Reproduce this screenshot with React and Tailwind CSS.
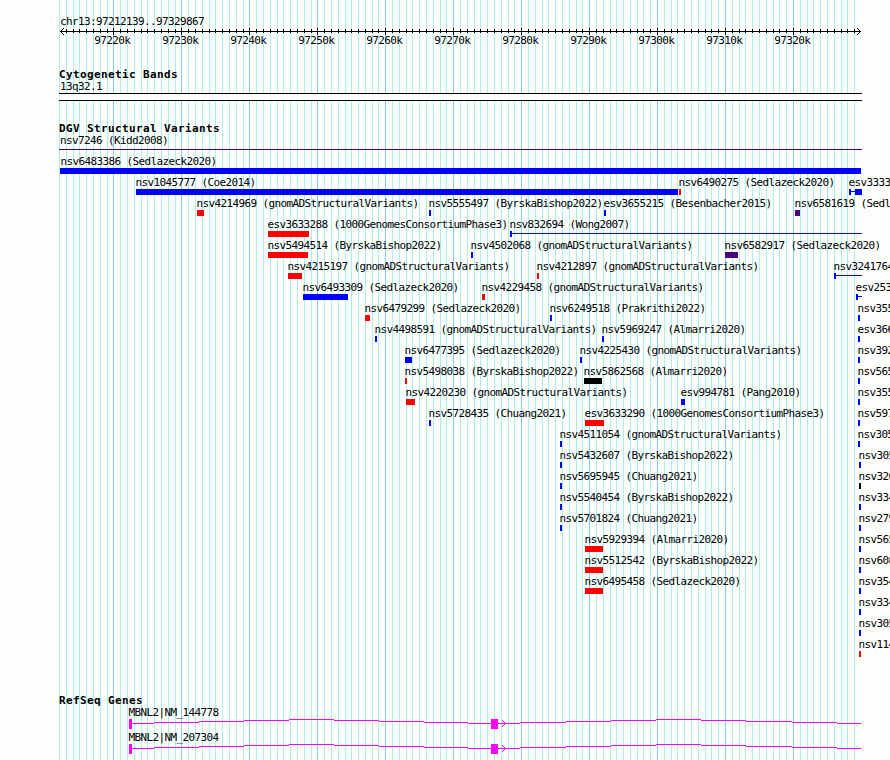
import React from 'react';

const BAR_COLORS = {
  gain: 'bg-[#0000ff]',
  loss: 'bg-[#ff0000]',
  complex: 'bg-[#4b0082]',
  other: 'bg-black',
};

const LABEL = "font-['DejaVu_Sans_Mono','Liberation_Mono',monospace] text-[11px] leading-[13px] tracking-[-0.62px] whitespace-pre text-black";
const HEADING = "font-['DejaVu_Sans_Mono','Liberation_Mono',monospace] text-[11px] leading-[13px] font-bold tracking-[0.38px] whitespace-pre text-black";

// One entry per lane: [name, x, width, type, line end]
const lanes = [
  [
    ['', 60, 801, 'gain'],
    ['nsv6483386 (Sedlazeck2020)', 61, 800, 'gain'],
  ],
  [
    ['nsv1045777 (Coe2014)', 136, 542, 'gain'],
    ['nsv6490275 (Sedlazeck2020)', 679, 2, 'loss'],
    ['esv3333', 849, 2, 'gain', 862],
    ['', 855, 7, 'gain'],
  ],
  [
    ['nsv4214969 (gnomADStructuralVariants)', 197, 7, 'loss'],
    ['nsv5555497 (ByrskaBishop2022)', 429, 2, 'gain'],
    ['esv3655215 (Besenbacher2015)', 604, 2, 'gain'],
    ['nsv6581619 (Sedl', 795, 5, 'complex'],
  ],
  [
    ['esv3633288 (1000GenomesConsortiumPhase3)', 268, 41, 'loss'],
    ['nsv832694 (Wong2007)', 510, 2, 'gain', 862],
  ],
  [
    ['nsv5494514 (ByrskaBishop2022)', 268, 40, 'loss'],
    ['nsv4502068 (gnomADStructuralVariants)', 471, 2, 'gain'],
    ['nsv6582917 (Sedlazeck2020)', 725, 13, 'complex'],
  ],
  [
    ['nsv4215197 (gnomADStructuralVariants)', 288, 14, 'loss'],
    ['nsv4212897 (gnomADStructuralVariants)', 537, 2, 'loss'],
    ['nsv3241764', 834, 2, 'gain', 862],
  ],
  [
    ['nsv6493309 (Sedlazeck2020)', 303, 45, 'gain'],
    ['nsv4229458 (gnomADStructuralVariants)', 482, 3, 'loss'],
    ['esv253', 856, 2, 'gain', 862],
  ],
  [
    ['nsv6479299 (Sedlazeck2020)', 365, 5, 'loss'],
    ['nsv6249518 (Prakrithi2022)', 550, 2, 'gain'],
    ['nsv355', 858, 2, 'gain'],
  ],
  [
    ['nsv4498591 (gnomADStructuralVariants)', 375, 2, 'gain'],
    ['nsv5969247 (Almarri2020)', 602, 2, 'gain'],
    ['esv366', 858, 2, 'gain'],
  ],
  [
    ['nsv6477395 (Sedlazeck2020)', 405, 7, 'gain'],
    ['nsv4225430 (gnomADStructuralVariants)', 580, 2, 'gain'],
    ['nsv392', 858, 2, 'gain'],
  ],
  [
    ['nsv5498038 (ByrskaBishop2022)', 405, 2, 'loss'],
    ['nsv5862568 (Almarri2020)', 584, 18, 'other'],
    ['nsv565', 858, 2, 'gain'],
  ],
  [
    ['nsv4220230 (gnomADStructuralVariants)', 406, 9, 'loss'],
    ['esv994781 (Pang2010)', 681, 4, 'gain'],
    ['nsv355', 858, 2, 'gain'],
  ],
  [
    ['nsv5728435 (Chuang2021)', 429, 2, 'gain'],
    ['esv3633290 (1000GenomesConsortiumPhase3)', 585, 19, 'loss'],
    ['nsv597', 858, 2, 'gain'],
  ],
  [
    ['nsv4511054 (gnomADStructuralVariants)', 560, 2, 'gain'],
    ['nsv305', 858, 2, 'gain'],
  ],
  [
    ['nsv5432607 (ByrskaBishop2022)', 560, 2, 'gain'],
    ['nsv305', 859, 2, 'gain'],
  ],
  [
    ['nsv5695945 (Chuang2021)', 560, 2, 'gain'],
    ['nsv326', 859, 2, 'other'],
  ],
  [
    ['nsv5540454 (ByrskaBishop2022)', 560, 2, 'gain'],
    ['nsv334', 859, 2, 'gain'],
  ],
  [
    ['nsv5701824 (Chuang2021)', 560, 2, 'gain'],
    ['nsv279', 859, 2, 'gain'],
  ],
  [
    ['nsv5929394 (Almarri2020)', 585, 18, 'loss'],
    ['nsv565', 859, 2, 'gain'],
  ],
  [
    ['nsv5512542 (ByrskaBishop2022)', 585, 18, 'loss'],
    ['nsv608', 859, 2, 'gain'],
  ],
  [
    ['nsv6495458 (Sedlazeck2020)', 585, 18, 'loss'],
    ['nsv354', 859, 2, 'gain'],
  ],
  [['nsv334', 859, 2, 'gain']],
  [['nsv305', 859, 2, 'gain']],
  [['nsv114', 859, 2, 'loss']],
];

const genes = ['MBNL2|NM_144778', 'MBNL2|NM_207304'];

// Intron hats, as [x start, x end, y] inside the gene row
const intronSteps = [
  [132, 154, 4], [154, 199, 3], [199, 244, 2], [244, 289, 1], [289, 334, 0],
  [334, 379, 1], [379, 424, 2], [424, 468, 3], [468, 491, 4],
  [498, 520, 4], [520, 566, 3], [566, 611, 2], [611, 656, 1], [656, 701, 0],
  [701, 746, 1], [746, 792, 2], [792, 837, 3], [837, 861, 4],
];

// One position per kilobase, 97212k to 97329k
const gridLines = Array.from({ length: 118 }, (_, i) => ({
  kb: 97212 + i,
  x: Math.floor(59.6145 + i * 6.7949),
}));

const isMajor = (kb) => kb % 10 === 0;

const Grid = () => (
  <svg className="absolute inset-0" width="890" height="760" shapeRendering="crispEdges">
    {gridLines.map(({ kb, x }) => (
      <rect key={kb} x={x} y="0" width="1" height="760" fill={isMajor(kb) ? '#87ceeb' : '#afeeee'} />
    ))}
  </svg>
);

const Ruler = () => (
  <div className="h-[53px] pt-[15px]">
    <p className={`${LABEL} pl-[60px]`}>chr13:97212139..97329867</p>
    <svg className="block" width="890" height="7" shapeRendering="crispEdges">
      <rect x="60" y="3" width="801" height="1" />
      {gridLines.slice(1).map(({ kb, x }) =>
        isMajor(kb) ? (
          <rect key={kb} x={x} y="0" width="1" height="7" />
        ) : (
          <rect key={kb} x={x} y="1" width="1" height="4" />
        )
      )}
      <path d="M61 2h1v1h-1zM62 1h1v1h-1zM63 0h1v1h-1zM61 4h1v1h-1zM62 5h1v1h-1zM63 6h1v1h-1z" />
      <path d="M859 2h1v1h-1zM858 1h1v1h-1zM857 0h1v1h-1zM859 4h1v1h-1zM858 5h1v1h-1zM857 6h1v1h-1z" />
    </svg>
    <div className="relative h-[13px] -mt-px">
      {gridLines.filter(({ kb }) => isMajor(kb)).map(({ kb, x }) => (
        <span key={kb} className={`${LABEL} absolute top-0`} style={{ left: x - 18.7 }}>
          {kb}k
        </span>
      ))}
    </div>
  </div>
);

const Feature = ({ name, x, width, type, lineEnd }) => (
  <div className="absolute top-0" style={{ left: x }}>
    <p className={`${LABEL} h-[13px] -ml-[0.5px]`}>{name}</p>
    <div className={`h-[6px] ${BAR_COLORS[type]}`} style={{ width }} />
    {lineEnd && (
      <div className={`absolute left-0 top-[15px] h-px ${BAR_COLORS[type]}`} style={{ width: lineEnd - x }} />
    )}
  </div>
);

const Gene = ({ name }) => (
  <div className="h-[25px]">
    <p className={`${LABEL} pl-[128.5px]`}>{name}</p>
    <svg className="block" width="890" height="10" fill="#ff00ff" shapeRendering="crispEdges">
      <rect x="129" y="0" width="3" height="10" />
      <rect x="491" y="0" width="7" height="10" />
      {intronSteps.map(([from, to, y]) => (
        <rect key={from} x={from} y={y} width={to - from} height="1" />
      ))}
      <path d="M502 1h1v1h-1zM503 2h1v1h-1zM504 3h1v3h-1zM503 6h1v1h-1zM502 7h1v1h-1z" />
    </svg>
  </div>
);

const App = () => {
  return (
    <div className="relative w-[890px] h-[760px] overflow-hidden bg-[#fcfefc]">
      <Grid />
      <main className="relative flex flex-col">
        <Ruler />

        <section className="h-[69px] pt-[15px]">
          <h2 className={`${HEADING} pl-[59px]`}>Cytogenetic Bands</h2>
          <p className={`${LABEL} pl-[60px] h-[12px] -mt-px`}>13q32.1</p>
          <div className="ml-[59px] mt-px w-[803px] h-[8px] border-y border-black bg-[#fcfefc]" />
        </section>

        <section className="h-[572px]">
          <h2 className={`${HEADING} pl-[59px] h-[12px]`}>DGV Structural Variants</h2>
          <div className="h-[21px]">
            <p className={`${LABEL} pl-[60px] h-[15px]`}>nsv7246 (Kidd2008)</p>
            <div className="ml-[59px] w-[803px] h-px bg-[#4b0082]" />
          </div>
          {lanes.map((lane, i) => (
            <div key={i} className="relative h-[21px]">
              {lane.map(([name, x, width, type, lineEnd]) => (
                <Feature key={x} name={name} x={x} width={width} type={type} lineEnd={lineEnd} />
              ))}
            </div>
          ))}
        </section>

        <section>
          <h2 className={`${HEADING} pl-[59px] h-[12px]`}>RefSeq Genes</h2>
          {genes.map((name) => (
            <Gene key={name} name={name} />
          ))}
        </section>
      </main>
    </div>
  );
};

export default App;
